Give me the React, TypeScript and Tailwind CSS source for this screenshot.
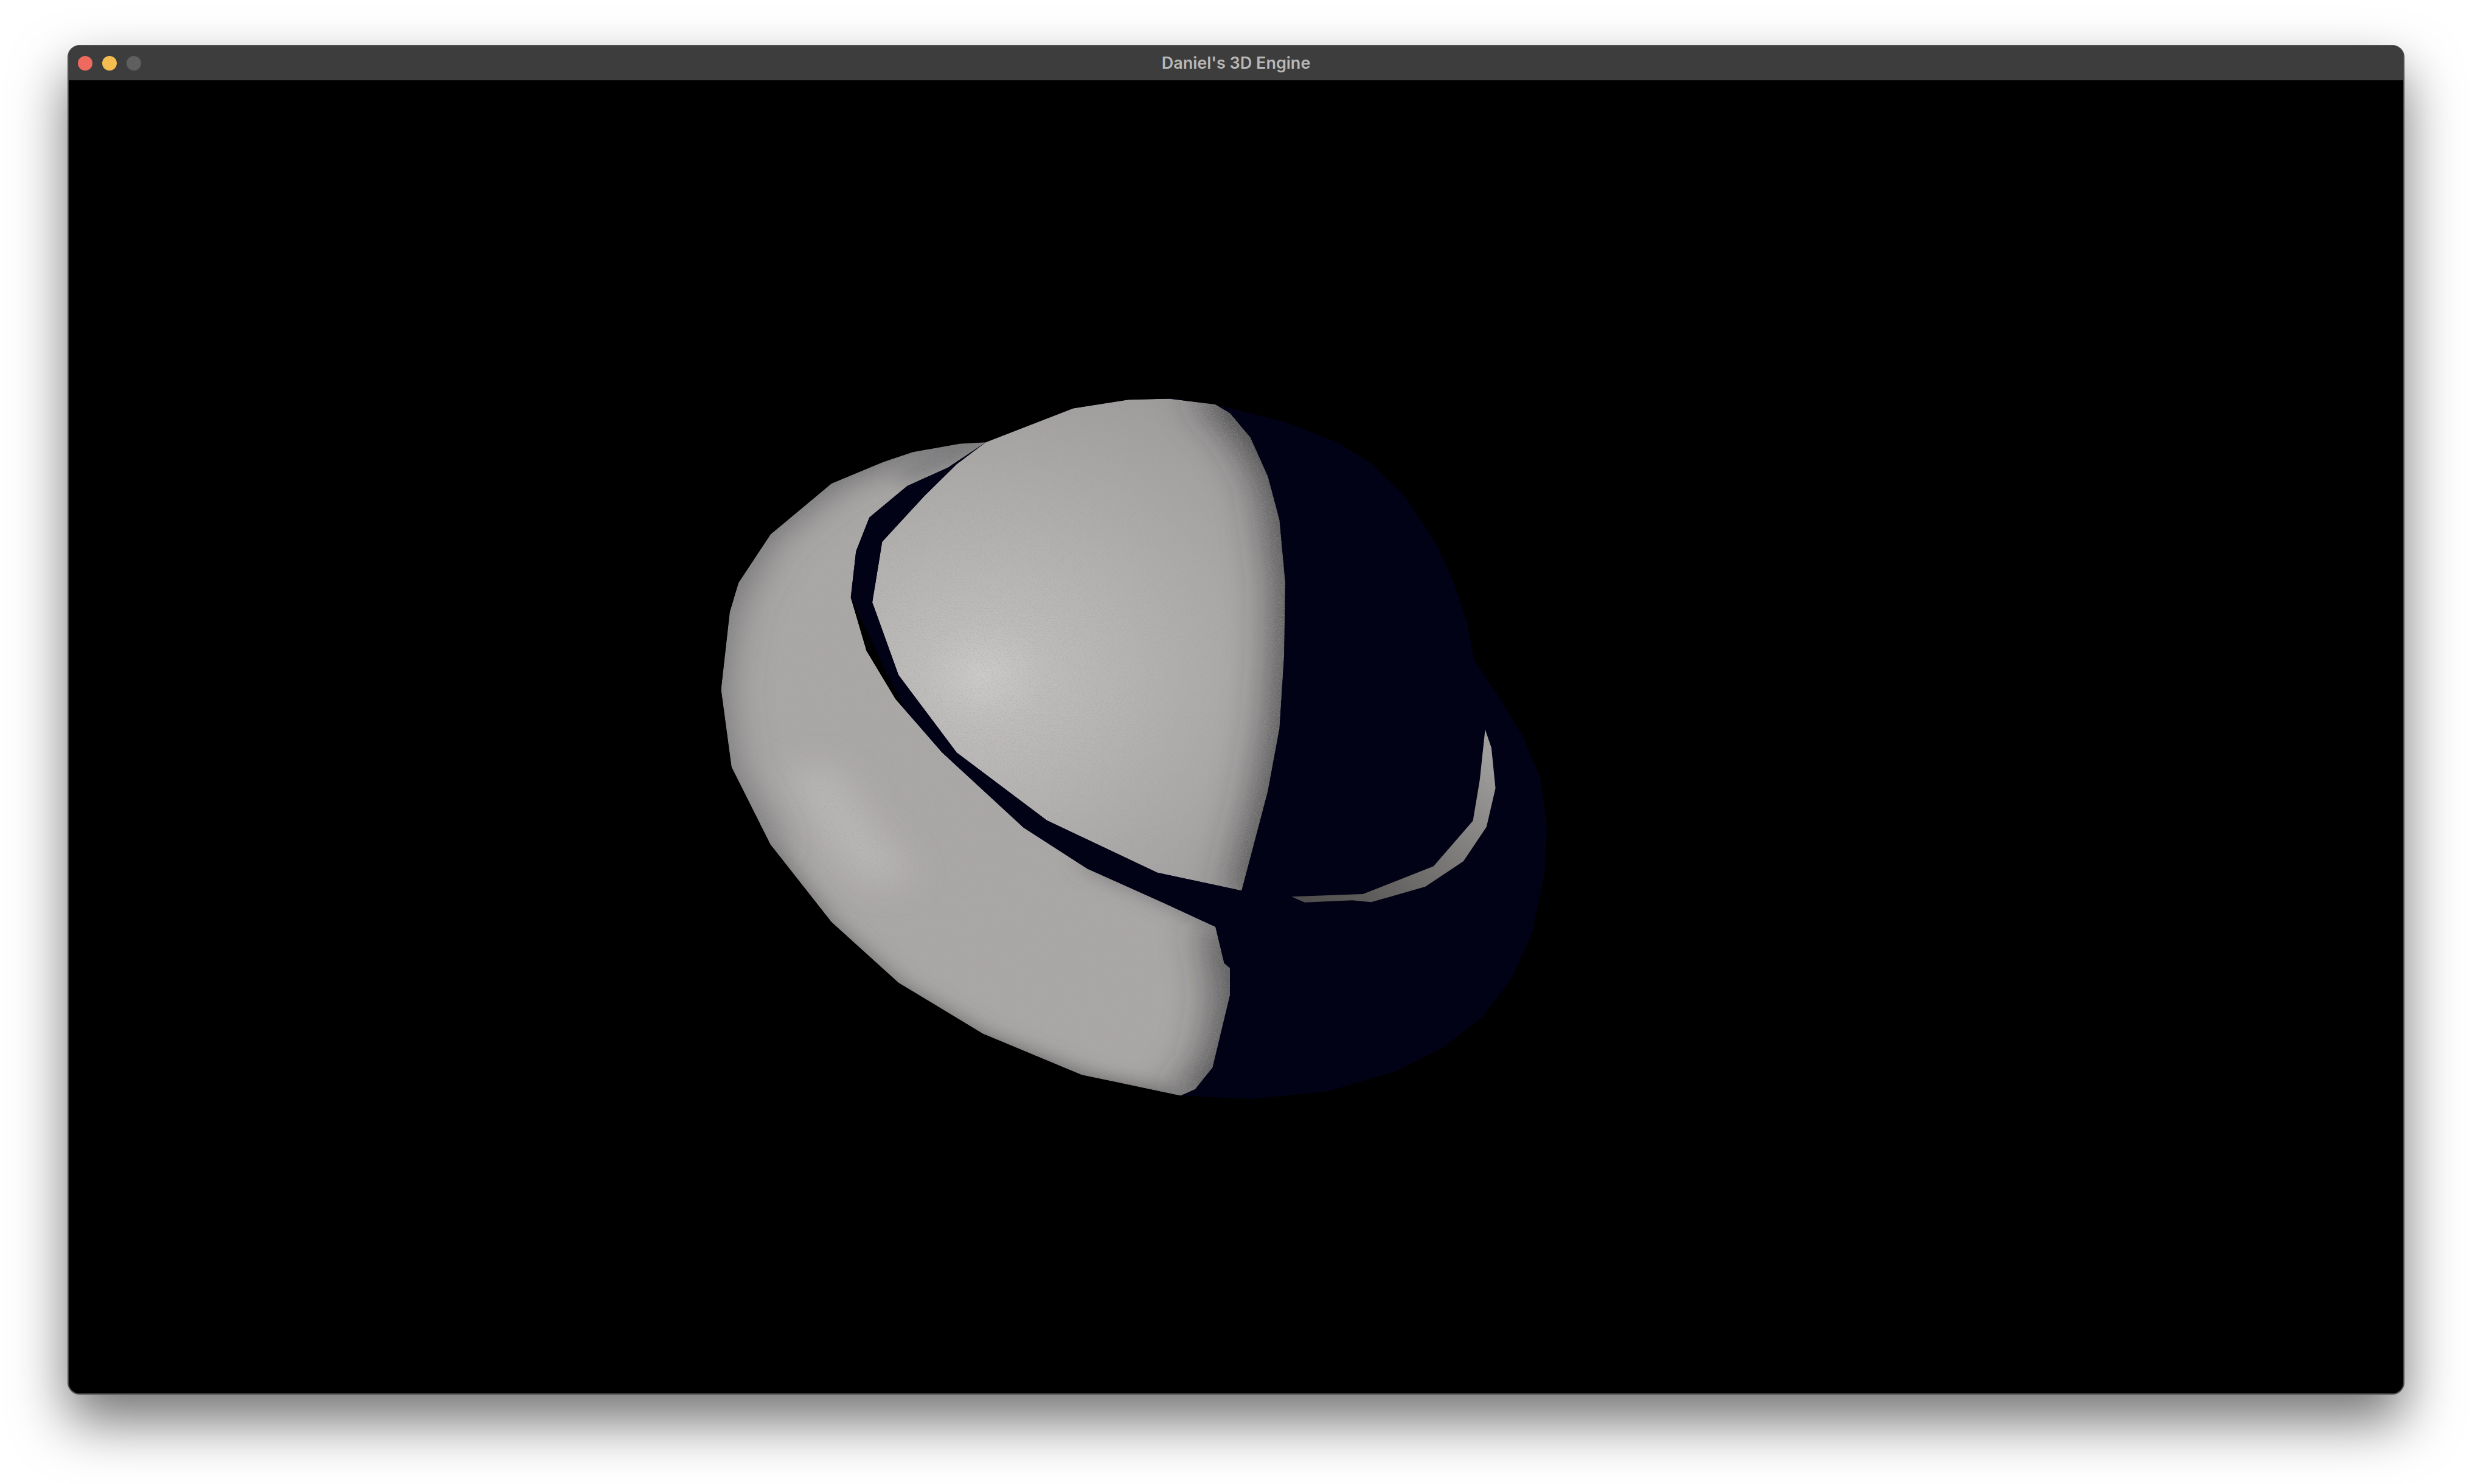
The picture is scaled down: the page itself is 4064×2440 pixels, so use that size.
const darkBody =
  "960,88 1060,118 1150,160 1210,205 1265,270 1320,370 1350,450 1372,530 1385,610 1430,690 1470,770 1498,850 1510,950 1506,1050 1485,1170 1450,1265 1400,1345 1330,1410 1250,1458 1130,1500 1000,1515 880,1508 600,1200 313,480 322,385 345,315 410,250 480,212 545,160 700,90 860,68";
const sphere =
  "545,160 695,90 790,72 860,70 940,82 965,100 1000,150 1030,230 1050,320 1060,450 1058,600 1050,750 1030,880 985,1085 840,1048 650,940 495,800 395,640 350,490 367,365 440,270 495,205";
const torus =
  "545,160 500,163 420,180 370,200 280,245 175,350 120,450 105,510 90,670 108,830 175,990 280,1150 395,1275 540,1380 710,1465 880,1508 905,1495 935,1450 965,1300 965,1245 955,1235 940,1160 850,1110 720,1040 610,955 470,800 390,690 340,590 313,480 322,385 345,315 410,250 480,212";
const ringSliver =
  "1440,150 1463,240 1478,440 1445,630 1360,800 1220,925 1020,1002 950,993 775,1003 727,975 990,962 1250,825 1395,600 1420,400";

function Model() {
  return (
    <svg viewBox="114 132 3838 2160" className="h-full w-full">
      <defs>
        <radialGradient id="sphereLight" gradientUnits="userSpaceOnUse" cx="540" cy="640" r="760">
          <stop offset="0" stopColor="#cdcbca" />
          <stop offset="0.14" stopColor="#bfbdbc" />
          <stop offset="0.45" stopColor="#b0aead" />
          <stop offset="1" stopColor="#979595" />
        </radialGradient>
        <linearGradient id="sliverLight" gradientUnits="userSpaceOnUse" x1="1470" y1="300" x2="800" y2="1000">
          <stop offset="0" stopColor="#a09e9c" />
          <stop offset="0.5" stopColor="#7a7876" />
          <stop offset="1" stopColor="#504f4e" />
        </linearGradient>
        <clipPath id="sphereClip">
          <polygon points={sphere} />
        </clipPath>
        <clipPath id="torusClip">
          <polygon points={torus} />
        </clipPath>
        <filter id="blurWide" filterUnits="userSpaceOnUse" x="-200" y="-200" width="2000" height="2000">
          <feGaussianBlur stdDeviation="42 35" />
        </filter>
        <filter id="blurMid" filterUnits="userSpaceOnUse" x="-200" y="-200" width="2000" height="2000">
          <feGaussianBlur stdDeviation="24 20" />
        </filter>
        <filter id="speckle" x="0" y="0" width="100%" height="100%">
          <feTurbulence type="fractalNoise" baseFrequency="0.4 0.48" numOctaves="2" seed="7" />
          <feColorMatrix values="0 0 0 0 0.36  0 0 0 0 0.34  0 0 0 0 0.32  7 0 0 0 -3.6" />
        </filter>
      </defs>

      <g transform="translate(1100 600) scale(0.9566 0.7972)">
        <polygon points={darkBody} fill="#020216" />

        <g clipPath="url(#sphereClip)">
          <polygon points={sphere} fill="url(#sphereLight)" />
          <polyline
            points="950,40 1025,140 1070,240 1095,450 1092,620 1082,760 1062,890 1015,1110"
            fill="none"
            stroke="#323235"
            strokeWidth="80"
            filter="url(#blurWide)"
          />
          <rect x="340" y="60" width="730" height="1040" filter="url(#speckle)" opacity="0.3" />
        </g>

        <g clipPath="url(#torusClip)">
          <polygon points={torus} fill="#aaa8a7" />
          <polyline
            points="250,850 300,950 370,1050"
            fill="none"
            stroke="#d2d0cf"
            strokeWidth="50"
            strokeLinecap="round"
            opacity="0.7"
            filter="url(#blurWide)"
          />
          <polyline
            points="965,1150 990,1300 965,1450 905,1525"
            fill="none"
            stroke="#323235"
            strokeWidth="70"
            filter="url(#blurWide)"
          />
          <polyline
            points="560,130 420,145 270,215 140,340 70,500 50,670 70,840 150,1010"
            fill="none"
            stroke="#55555a"
            strokeWidth="60"
            filter="url(#blurWide)"
          />
          <polyline
            points="560,150 480,190 400,235"
            fill="none"
            stroke="#6f6f72"
            strokeWidth="30"
            filter="url(#blurMid)"
          />
          <polyline
            points="150,1000 260,1170 380,1300 530,1405 710,1490 880,1530"
            fill="none"
            stroke="#5f5e5e"
            strokeWidth="50"
            filter="url(#blurMid)"
          />
          <polyline
            points="720,1020 850,1090 950,1145"
            fill="none"
            stroke="#5f5f63"
            strokeWidth="24"
            filter="url(#blurMid)"
          />
          <rect x="80" y="150" width="900" height="1370" filter="url(#speckle)" opacity="0.26" />
        </g>
      </g>

      <g transform="translate(1800 1150) scale(0.4464 0.3333)">
        <polygon points={ringSliver} fill="url(#sliverLight)" />
      </g>
    </svg>
  );
}

export default function App() {
  return (
    <div className="h-[2440px] w-[4064px] overflow-hidden bg-white pl-[111px] pt-[74px]">
      <div className="flex h-[2219px] w-[3842px] flex-col overflow-hidden rounded-[20px] border-2 border-[#4e4e4e] bg-black shadow-[0_44px_90px_rgba(0,0,0,0.55)]">
        <div className="grid h-[56px] shrink-0 grid-cols-[1fr_auto_1fr] items-center bg-[#3d3d3d]">
          <div className="flex gap-[16px] pl-[15px]">
            <span className="h-[24px] w-[24px] rounded-full bg-[#ee6a5f]" />
            <span className="h-[24px] w-[24px] rounded-full bg-[#f5bd4f]" />
            <span className="h-[24px] w-[24px] rounded-full bg-[#5f5f5f]" />
          </div>
          <span className="-translate-y-px font-['Inter',sans-serif] text-[27px] font-semibold leading-none text-[#b8b8b8]">
            Daniel's 3D Engine
          </span>
          <div />
        </div>
        <div className="min-h-0 flex-1">
          <Model />
        </div>
      </div>
    </div>
  );
}
